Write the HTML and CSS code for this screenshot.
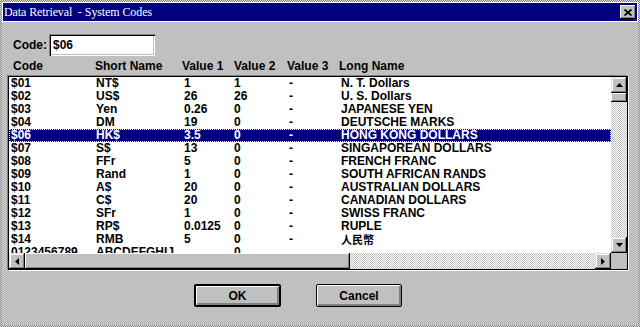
FILE: index.html
```html
<!DOCTYPE html>
<html>
<head>
<meta charset="utf-8">
<link rel="stylesheet" href="styles.css">
</head>
<body>
<div class="window">
  <div class="frame">
    <div class="titlewrap">
      <div class="titlebar">
        <span class="title">Data Retrieval  - System Codes</span>
        <div class="close">
          <svg width="8" height="7" viewBox="0 0 8 7"><path d="M0.5 0.5 L7.5 6.5 M7.5 0.5 L0.5 6.5" stroke="#000" stroke-width="1.8" fill="none"/></svg>
        </div>
      </div>
    </div>
    <div class="client">
      <div class="code-row">
        <span class="code-label">Code:</span>
        <div class="code-input">$06</div>
      </div>
      <div class="header">
        <span>Code</span><span>Short Name</span><span>Value 1</span><span>Value 2</span><span>Value 3</span><span>Long Name</span>
      </div>
      <div class="listbox">
        <div class="list-main">
          <div class="rows">
            <div class="row"><span>$01</span><span>NT$</span><span>1</span><span>1</span><span>-</span><span>N. T. Dollars</span></div>
            <div class="row"><span>$02</span><span>US$</span><span>26</span><span>26</span><span>-</span><span>U. S. Dollars</span></div>
            <div class="row"><span>$03</span><span>Yen</span><span>0.26</span><span>0</span><span>-</span><span>JAPANESE YEN</span></div>
            <div class="row"><span>$04</span><span>DM</span><span>19</span><span>0</span><span>-</span><span>DEUTSCHE MARKS</span></div>
            <div class="row sel"><span>$06</span><span>HK$</span><span>3.5</span><span>0</span><span>-</span><span>HONG KONG DOLLARS</span></div>
            <div class="row"><span>$07</span><span>S$</span><span>13</span><span>0</span><span>-</span><span>SINGAPOREAN DOLLARS</span></div>
            <div class="row"><span>$08</span><span>FFr</span><span>5</span><span>0</span><span>-</span><span>FRENCH FRANC</span></div>
            <div class="row"><span>$09</span><span>Rand</span><span>1</span><span>0</span><span>-</span><span>SOUTH AFRICAN RANDS</span></div>
            <div class="row"><span>$10</span><span>A$</span><span>20</span><span>0</span><span>-</span><span>AUSTRALIAN DOLLARS</span></div>
            <div class="row"><span>$11</span><span>C$</span><span>20</span><span>0</span><span>-</span><span>CANADIAN DOLLARS</span></div>
            <div class="row"><span>$12</span><span>SFr</span><span>1</span><span>0</span><span>-</span><span>SWISS FRANC</span></div>
            <div class="row"><span>$13</span><span>RP$</span><span>0.0125</span><span>0</span><span>-</span><span>RUPLE</span></div>
            <div class="row"><span>$14</span><span>RMB</span><span>5</span><span>0</span><span>-</span><span class="cjk">人民幣</span></div>
            <div class="row"><span>0123456789</span><span>ABCDEFGHIJ</span><span></span><span>0</span><span></span><span></span></div>
          </div>
          <div class="vscroll">
            <div class="sbtn"><svg width="7" height="4" viewBox="0 0 7 4"><path d="M3.5 0 L7 4 L0 4 Z" fill="#000"/></svg></div>
            <div class="vthumb"></div>
            <div class="track"></div>
            <div class="sbtn"><svg width="7" height="4" viewBox="0 0 7 4"><path d="M0 0 L7 0 L3.5 4 Z" fill="#000"/></svg></div>
          </div>
        </div>
        <div class="hscroll-row">
          <div class="hscroll">
            <div class="sbtn"><svg width="4" height="7" viewBox="0 0 4 7"><path d="M4 0 L4 7 L0 3.5 Z" fill="#000"/></svg></div>
            <div class="hthumb"></div>
            <div class="track"></div>
            <div class="sbtn"><svg width="4" height="7" viewBox="0 0 4 7"><path d="M0 0 L4 3.5 L0 7 Z" fill="#000"/></svg></div>
          </div>
          <div class="corner"></div>
        </div>
      </div>
      <div class="buttons">
        <div class="btn default">OK</div>
        <div class="btn cancel">Cancel</div>
      </div>
    </div>
  </div>
</div>
</body>
</html>
```
FILE: styles.css
```css
* { box-sizing: border-box; }
body {
  margin: 0;
  width: 640px;
  height: 327px;
  overflow: hidden;
  font: bold 12px "Liberation Sans", Arial, sans-serif;
  color: #000;
}
.window {
  width: 640px;
  height: 327px;
  padding: 2px;
  background: repeating-conic-gradient(#808080 0 25%, #dcdcdc 0 50%) 0 0 / 2px 2px;
  display: flex;
}
.frame {
  flex: 1;
  background: #c0c0c0;
  display: flex;
  flex-direction: column;
}
.titlewrap {
  background: #fff;
  padding: 1px;
}
.titlebar {
  height: 18px;
  background: #000080;
  display: flex;
  align-items: center;
  justify-content: space-between;
  padding-left: 1px;
}
.title {
  color: #fff;
  font: normal 12px "Liberation Serif", "Times New Roman", serif;
  white-space: pre;
  letter-spacing: -0.1px;
}
.close {
  width: 16px;
  height: 14px;
  margin-right: 1px;
  background: #c0c0c0;
  box-shadow: inset -1px -1px #000, inset 1px 1px #fff, inset -2px -2px #808080;
  display: flex;
  align-items: center;
  justify-content: center;
}
.client {
  display: flex;
  flex-direction: column;
  padding-top: 12px;
}
.code-row {
  display: flex;
  align-items: center;
  margin-left: 11px;
  height: 22px;
}
.code-label { width: 36px; }
.code-input {
  width: 106px;
  height: 22px;
  background: #fff;
  box-shadow: inset 1px 1px #808080, inset 2px 2px #000, inset -1px -1px #fff, inset -2px -2px #c0c0c0;
  padding-left: 4px;
  line-height: 22px;
}
.header {
  display: grid;
  grid-template-columns: 82px 87px 52px 53px 52px 1fr;
  margin: 4px 0 0 11px;
  height: 13px;
  line-height: 13px;
  white-space: nowrap;
}
.listbox {
  margin: 3px 0 0 6px;
  width: 620px;
  height: 194px;
  border: 1px solid #000;
  box-shadow: -1px -1px 0 #808080, 1px 1px 0 #fff;
  display: flex;
  flex-direction: column;
  background: #fff;
}
.list-main {
  display: flex;
  height: 176px;
}
.rows {
  flex: 1;
  overflow: hidden;
}
.row {
  display: grid;
  grid-template-columns: 85px 88px 50px 55px 52px 1fr;
  padding-left: 2px;
  height: 13px;
  line-height: 13px;
  white-space: nowrap;
}
.row.sel {
  background: #000080;
  color: #fff;
  outline: 1px dotted #ffff80;
  outline-offset: -1px;
}
.cjk {
  font-family: "Noto Sans CJK TC", "Noto Sans CJK SC", sans-serif;
  font-size: 11px;
  line-height: 13px;
}
.vscroll {
  width: 16px;
  display: flex;
  flex-direction: column;
}
.track {
  flex: 1;
  background: repeating-conic-gradient(#c0c0c0 0 25%, #fff 0 50%) 0 0 / 2px 2px;
}
.sbtn {
  width: 16px;
  height: 16px;
  flex: none;
  background: #c0c0c0;
  box-shadow: inset -1px -1px #000, inset 1px 1px #dfdfdf, inset -2px -2px #808080, inset 2px 2px #fff;
  display: flex;
  align-items: center;
  justify-content: center;
}
.vthumb {
  height: 9px;
  flex: none;
  background: #c0c0c0;
  box-shadow: inset -1px -1px #000, inset 1px 1px #fff, inset -2px -2px #808080;
}
.hscroll-row {
  display: flex;
  height: 16px;
}
.hscroll {
  flex: 1;
  display: flex;
}
.hthumb {
  width: 325px;
  flex: none;
  background: #c0c0c0;
  box-shadow: inset -1px -1px #000, inset 1px 1px #fff, inset -2px -2px #808080;
}
.corner {
  width: 16px;
  background: #c0c0c0;
}
.buttons {
  display: flex;
  gap: 35px;
  margin: 14px 0 0 192px;
}
.btn {
  height: 23px;
  background: #c0c0c0;
  border: 1px solid #000;
  border-radius: 2px;
  box-shadow: inset 1px 1px #fff, inset -1px -1px #808080, inset -2px -2px #808080;
  display: flex;
  align-items: center;
  justify-content: center;
}
.btn.default { width: 87px; border-width: 2px; }
.btn.cancel { width: 86px; }
```
